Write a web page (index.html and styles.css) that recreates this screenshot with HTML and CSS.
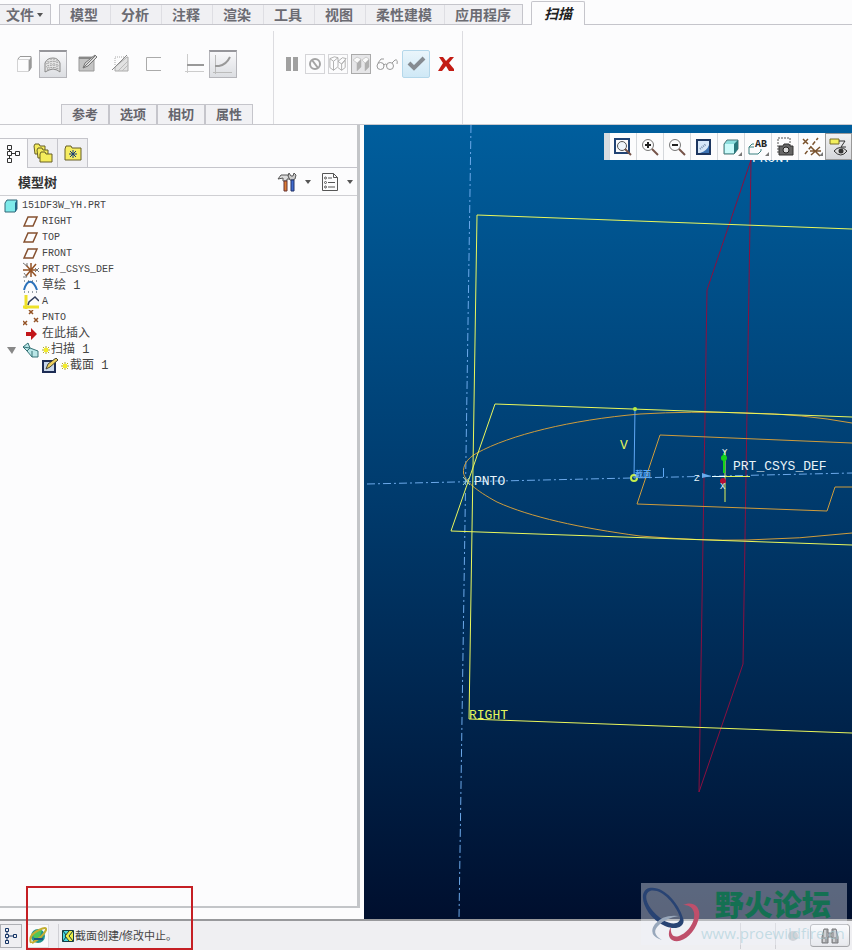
FILE: index.html
```html
<!DOCTYPE html>
<html lang="zh-CN">
  <head>
    <meta charset="UTF-8" />
    <meta name="viewport" content="width=device-width, initial-scale=1.0" />
    <title>151DF3W_YH.PRT</title>
    <link rel="stylesheet" href="styles.css">
  </head>
  <body>
    <nav class="menuBar">
      <button class="fileMenu">文件<span class="caret"></span></button>
      <div class="menuTabs">
        <button>模型</button>
        <button>分析</button>
        <button>注释</button>
        <button>渲染</button>
        <button>工具</button>
        <button>视图</button>
        <button>柔性建模</button>
        <button>应用程序</button>
      </div>
      <button class="activeTab">扫描</button>
    </nav>

    <div class="ribbon">
      <div class="ribbonGroup sweepGroup">
        <div class="tools">
          <div class="toolSet">
            <button class="tool" aria-label="实体">
              <svg width="18" height="18" viewBox="0 0 18 18" fill="none"><path d="M1.500 4.500h11v12h-11z" stroke="#aaa" stroke-dasharray="1 1"/><path d="M2 4l2-2.500h11v11L13 16" stroke="#999"/><path d="M13 5l2.500-3v11L13 16z" fill="#999"/></svg>
            </button>
            <button class="tool pressed" aria-label="曲面">
              <svg width="20" height="20" viewBox="0 0 20 20"><path d="M2 17V8Q4 3 10 3q5 0 7 5v9l-3-2q-4-2-8 0z" fill="#e4e4e4" stroke="#888"/><path d="M5 6v9M8 4v10M11 4v10M14 5v9M3 9q7-5 13-1M3 12q7-4 13-1M4 14q6-3 12 0" stroke="#999" stroke-dasharray="1 1" fill="none"/></svg>
            </button>
          </div>
          <div class="toolSet loose">
            <button class="tool" aria-label="草绘截面">
              <svg width="20" height="20" viewBox="0 0 20 20"><path d="M1 3h15v14H1z" fill="#c4c4c4" stroke="#999"/><path d="M1 3h15v2H1z" fill="#888"/><path d="M5 14l2-5 10-8 2 2-9 9z" fill="#ddd" stroke="#777"/><path d="M5 14l12-12" stroke="#777"/></svg>
            </button>
            <button class="tool" aria-label="移除材料">
              <svg width="20" height="20" viewBox="0 0 20 20" fill="none"><path d="M4 11V3h9" stroke="#aaa" stroke-dasharray="1 1"/><path d="M4 17v-4L16 3h1v14z" fill="#e2e2e2" stroke="#aaa"/><path d="M7 17L17 7M11 17l6-6" stroke="#bbb"/><path d="M1 16L16 1" stroke="#888"/></svg>
            </button>
            <button class="tool" aria-label="薄板">
              <svg width="18" height="18" viewBox="0 0 18 18" fill="none"><path d="M16 2.500H1.500v13H16" stroke="#aaa"/></svg>
            </button>
          </div>
          <div class="toolSet">
            <button class="tool" aria-label="恒定截面">
              <svg width="20" height="20" viewBox="0 0 20 20"><path d="M2.500 0v19M0 17.500h19" stroke="#ccc"/><path d="M2 11h17" stroke="#999" stroke-width="2"/></svg>
            </button>
            <button class="tool pressed" aria-label="可变截面">
              <svg width="20" height="20" viewBox="0 0 20 20" fill="none"><path d="M2.500 0v19M0 17.500h19" stroke="#bbb"/><path d="M2 11h4q7-1 11-9" stroke="#999" stroke-width="2"/></svg>
            </button>
          </div>
        </div>
        <div class="subTabs">
          <button>参考</button>
          <button>选项</button>
          <button>相切</button>
          <button>属性</button>
        </div>
      </div>
      <div class="ribbonGroup confirmGroup">
        <div class="tools">
          <button class="tool small" aria-label="暂停">
            <svg width="14" height="14" viewBox="0 0 14 14"><path d="M1 0h5v14H1zM8 0h5v14H8z" fill="#a0a0a0"/></svg>
          </button>
          <button class="tool small framed" aria-label="无预览">
            <svg width="14" height="14" viewBox="0 0 14 14" fill="none" stroke="#a4a4a4" stroke-width="2"><circle cx="7" cy="7" r="5"/><path d="M4 3l6 8"/></svg>
          </button>
          <button class="tool small framed" aria-label="分离预览">
            <svg width="18" height="18" viewBox="0 0 20 18" fill="none" stroke="#aaa"><path d="M1 3l4 3v10L1 13zM5 6l5-4v10l-5 4M10 2L6 1 1 3M10 6l4 3v7l-4-3M14 9l4-4v8l-4 3M10 6l5-4 4 1-5 6"/></svg>
          </button>
          <button class="tool small framed sunk" aria-label="连接预览">
            <svg width="18" height="16" viewBox="0 0 18 16"><path d="M1 4l4-3 4 2v8l-4 4V7zM10 4l4-3 3 2v8l-4 4V7z" fill="#fafafa" stroke="#ccc"/><path d="M5 7l4-4v8l-4 4zM13 7l4-4v8l-4 4z" fill="#b0b0b0"/></svg>
          </button>
          <button class="tool small glasses" aria-label="特征预览">
            <svg width="22" height="14" viewBox="0 0 22 14" fill="none" stroke="#999"><circle cx="4.500" cy="9" r="3.500"/><circle cx="14" cy="9" r="3.500"/><path d="M8 8q1-2 3 0M2 6l3-4h3M16 6l3-3q3-1 2 4"/></svg>
          </button>
          <button class="tool accept" aria-label="确定">
            <svg width="20" height="18" viewBox="0 0 20 18"><path d="M3 8l5 5L18 3" fill="none" stroke="#858b91" stroke-width="4"/></svg>
          </button>
          <button class="tool cancel" aria-label="取消">
            <svg width="18" height="18" viewBox="0 0 18 18"><path d="M2 2h4l3 4 4-4h4l-5 6 5 6v2h-5l-3-5-4 5H1l5-8z" fill="#c31c14"/></svg>
          </button>
        </div>
      </div>
    </div>

    <main class="workArea">
      <aside class="sidebar">
        <div class="treePanel">
          <div class="panelTabs">
            <button class="current" aria-label="模型树">
              <svg width="16" height="20" viewBox="0 0 16 20" fill="none" stroke="#333"><path d="M2.500 1.500h4v4h-4zM2.500 7.500h4v4h-4zM2.500 14.500h4v4h-4zM10.500 7.500h4v4h-4zM4.500 5.500v2M4.500 11.500v3M6.500 9.500h4"/></svg>
            </button>
            <button aria-label="文件夹浏览器">
              <svg width="20" height="20" viewBox="0 0 20 20" fill="#f5ec5c" stroke="#665f26"><path d="M1 3l1-2h4l1 2h5v8H2z"/><path d="M4 7l1-2h4l1 2h5v8H5z"/><path d="M7 11l1-2h4l1 2h6v8H7z"/></svg>
            </button>
            <button aria-label="收藏夹">
              <svg width="18" height="18" viewBox="0 0 18 18"><path d="M1 5l1-3h5l1 2h9v12H1z" fill="#f6ed63" stroke="#665f26"/><path d="M9 6v8M5 10h8M6 7l6 6M12 7l-6 6" stroke="#143c78"/></svg>
            </button>
          </div>
          <div class="treeHeader">
            <h2>模型树</h2>
            <button aria-label="设置">
              <svg width="20" height="20" viewBox="0 0 20 20"><path d="M1 7l3-4h7l2 4h-3v2H6V6z" fill="#ddd" stroke="#555"/><path d="M7 9h3v10H7z" fill="#de7d32" stroke="#633"/><path d="M12 1l2 3h2l1-3 2 2-1 4-2 1h-3l-2-4z" fill="#ccc" stroke="#555"/><path d="M14 8h3v11h-3z" fill="#3f6bd0" stroke="#236"/></svg>
              <span class="caret"></span>
            </button>
            <button aria-label="显示">
              <svg width="18" height="20" viewBox="0 0 18 20" fill="none" stroke="#555"><path d="M1.500 1.500h11l4 4v13h-15zM12.500 1.500v4h4M7 6h4M7 10.500h7M7 15h7"/><circle cx="4.500" cy="6" r="1"/><circle cx="4.500" cy="10.500" r="1"/><circle cx="4.500" cy="15" r="1"/></svg>
              <span class="caret"></span>
            </button>
          </div>
          <ul class="tree">
            <li>
              <svg width="16" height="16" viewBox="0 0 16 16"><path d="M2 5l2-3h10v9l-2 3H2z" fill="#7eeaea" stroke="#367"/><path d="M12 5l2-3v9l-2 3z" fill="#268"/></svg>
              <span>151DF3W_YH.PRT</span>
            </li>
            <li class="child">
              <svg width="16" height="16" viewBox="0 0 16 16"><path d="M5 3h9l-4 9H1z" fill="none" stroke="#85502f" stroke-width="1.500"/></svg>
              <span>RIGHT</span>
            </li>
            <li class="child">
              <svg width="16" height="16" viewBox="0 0 16 16"><path d="M5 3h9l-4 9H1z" fill="none" stroke="#85502f" stroke-width="1.500"/></svg>
              <span>TOP</span>
            </li>
            <li class="child">
              <svg width="16" height="16" viewBox="0 0 16 16"><path d="M5 3h9l-4 9H1z" fill="none" stroke="#85502f" stroke-width="1.500"/></svg>
              <span>FRONT</span>
            </li>
            <li class="child">
              <svg width="16" height="16" viewBox="0 0 16 16"><path d="M0 8h13M8 1v14M3 3l10 11M13 2L3 14" stroke="#935225" stroke-width="1.500"/><path d="M0 1l4 3V1M0 15h4l-3-4M12 6l4 4M16 6l-4 4" stroke="#777" fill="none"/></svg>
              <span>PRT_CSYS_DEF</span>
            </li>
            <li class="child">
              <svg width="16" height="16" viewBox="0 0 16 16" fill="none"><path d="M1 12c3-11 9-11 13 0" stroke="#2b72bb" stroke-width="2"/><path d="M1 3h14M1 14h14" stroke="#345" stroke-dasharray="1 3"/></svg>
              <span class="cjk">草绘 1</span>
            </li>
            <li class="child">
              <svg width="16" height="16" viewBox="0 0 16 16" fill="none"><path d="M3 1v14M0 13h16" stroke="#eee12a" stroke-width="3"/><path d="M5 11l1-3 6-5 4 4" stroke="#333f5d" stroke-width="1.500"/></svg>
              <span>A</span>
            </li>
            <li class="child">
              <svg width="16" height="16" viewBox="0 0 16 16"><path d="M6 0l4 4M10 0L6 4M0 11l4 4M4 11l-4 4M11 8l4 4M15 8l-4 4" stroke="#935225" stroke-width="1.500"/></svg>
              <span>PNTO</span>
            </li>
            <li class="child">
              <svg width="16" height="16" viewBox="0 0 16 16"><path d="M3 6h5V2l6 6-6 6v-4H3z" fill="#c3171b"/></svg>
              <span class="cjk">在此插入</span>
            </li>
            <li class="parent">
              <svg width="16" height="16" viewBox="0 0 16 16"><path d="M3 5h9l-4 7z" fill="#888"/></svg>
              <svg width="16" height="16" viewBox="0 0 16 16"><path d="M0 5l5-4 2 5 8 3v6H9L4 9z" fill="#b9e6e7" stroke="#377377"/><path d="M0 5l7 1-3 3M9 15V9" fill="none" stroke="#377377"/></svg>
              <svg class="star" width="8" height="10" viewBox="0 0 8 10"><path d="M4 1v8M0 5h8M1 2l6 6M7 2L1 8" stroke="#b5ac20"/><path d="M2 3h4v4H2z" fill="#f3ec2a"/></svg>
              <span class="cjk">扫描 1</span>
            </li>
            <li class="grandchild">
              <svg width="16" height="16" viewBox="0 0 16 16"><path d="M1 3h12v11H1z" fill="#c7d6e9" stroke="#1d2c54" stroke-width="2"/><path d="M4 11l2-5 8-6 2 2-8 7z" fill="#edcf5c" stroke="#443"/></svg>
              <svg class="star" width="8" height="10" viewBox="0 0 8 10"><path d="M4 1v8M0 5h8M1 2l6 6M7 2L1 8" stroke="#b5ac20"/><path d="M2 3h4v4H2z" fill="#f3ec2a"/></svg>
              <span class="cjk">截面 1</span>
            </li>
          </ul>
        </div>
      </aside>

      <section class="viewport">
        <svg class="scene" viewBox="364 125 488 795" preserveAspectRatio="xMinYMin slice" fill="none">
          <g stroke="#6ca9ea" stroke-dasharray="8 3 2 3">
            <path d="M471 125L459 918"/>
            <path d="M367 484L852 473"/>
          </g>
          <path d="M751 160L707 290L699 792L743 664Z" stroke="#8a1040"/>
          <g stroke="#cf9c3c">
            <path d="M852 423Q803 414 747 413Q690 411 640 414C570 420 510 435 477 453C466 459 463 466 463.500 473C465 481 475 490 497 502C530 517 580 528 640 536Q700 541 747 540Q800 539 852 533"/>
            <path d="M852 443L660 435L637 504L827 511L835 487H852"/>
          </g>
          <g stroke="#eaf75c">
            <path d="M852 229L477 215L469 719L852 733"/>
            <path d="M852 417L495 404L451 531L852 545"/>
          </g>
          <path d="M635 408L634 478M663.500 468v9" stroke="#5fa8f5"/>
          <circle cx="635" cy="409" r="2" fill="#b9ee42"/>
          <circle cx="634" cy="478" r="3" stroke="#c4ee4d" stroke-width="2"/>
          <path d="M463 477l7 8M470 477l-7 8" stroke="#a7d8c2"/>
          <path d="M725 450V502M725 476.500H750" stroke="#e1f55b"/>
          <path d="M712 476.500H725" stroke="#e9ffff"/>
          <path d="M702 473l9 3-9 2z" fill="#68abed"/>
          <path d="M724 453v20" stroke="#13d41b" stroke-width="2"/>
          <circle cx="724" cy="458" r="3" fill="#13d41b"/>
          <circle cx="723" cy="481" r="3" fill="#b40d35"/>
          <g class="sceneText">
            <text x="474" y="485">PNTO</text>
            <text x="733" y="470">PRT_CSYS_DEF</text>
            <text x="752" y="162">FRONT</text>
            <text class="yellow" x="469" y="719">RIGHT</text>
            <text class="yellow" x="620" y="449">V</text>
            <text class="axis" x="694" y="481">Z</text>
            <text class="axis" x="722" y="455">Y</text>
            <text class="axis" x="720" y="489">X</text>
            <text class="sectionText" x="635" y="477">截面</text>
          </g>
        </svg>
        <div class="viewTools">
          <button aria-label="重新调整">
            <svg width="20" height="20" viewBox="0 0 20 20" fill="none"><path d="M2 2h14v14H2z" stroke="#214374" stroke-width="2"/><circle cx="9" cy="9" r="4.500" fill="#eef5fb" stroke="#555"/><path d="M12 12l6 6" stroke="#755349" stroke-width="2"/></svg>
          </button>
          <button aria-label="放大">
            <svg width="20" height="20" viewBox="0 0 20 20" fill="none"><circle cx="8" cy="8" r="5.500" stroke="#777"/><path d="M5 8h6M8 5v6" stroke="#222" stroke-width="2"/><path d="M12 12l6 6" stroke="#755349" stroke-width="2"/></svg>
          </button>
          <button aria-label="缩小">
            <svg width="20" height="20" viewBox="0 0 20 20" fill="none"><circle cx="8" cy="8" r="5.500" stroke="#777"/><path d="M5 8h6" stroke="#222" stroke-width="2"/><path d="M12 12l6 6" stroke="#755349" stroke-width="2"/></svg>
          </button>
          <button aria-label="重画">
            <svg width="18" height="18" viewBox="0 0 18 18"><path d="M2 2h13v14H2z" fill="#d7e7f8" stroke="#1d3660" stroke-width="2"/><path d="M14 7v8H5q7-2 9-8z" fill="#3c72b2"/><path d="M5 11l6-5" stroke="#7d93b0" stroke-width="2" stroke-dasharray="1 1"/></svg>
          </button>
          <button class="more" aria-label="显示样式">
            <svg width="18" height="18" viewBox="0 0 18 18"><path d="M2 6l3-4h11v9l-4 5H2z" fill="#8bdede" stroke="#4d7476"/><path d="M3 6h9v9H3z" fill="#cafafa"/><path d="M12 6l4-4v9l-4 5z" fill="#28777b"/></svg>
          </button>
          <button class="more" aria-label="已命名视图">
            <svg width="20" height="20" viewBox="0 0 20 20" fill="none"><path d="M6 7H4l-3 3v7h9l3-3v-2M1 10h5" stroke="#398080"/><text class="iconText" x="7" y="10">AB</text></svg>
          </button>
          <button aria-label="视图管理器">
            <svg width="20" height="20" viewBox="0 0 20 20"><path d="M3 1h12v8M3 2v15" fill="none" stroke="#555" stroke-dasharray="2 1"/><path d="M4 9h4l1-2h5l1 2h3v9H4z" fill="#666" stroke="#333"/><circle cx="11" cy="13" r="3" fill="#ddd" stroke="#222"/></svg>
          </button>
          <button class="more" aria-label="基准显示过滤器">
            <svg width="20" height="20" viewBox="0 0 20 20"><path d="M1 2l5 5M6 2L1 7M9 10l9 9M9 18l9-8M8 14h11" stroke="#79522d" stroke-width="1.500"/><path d="M3 17L16 1" stroke="#79522d" stroke-width="1.500" stroke-dasharray="4 2"/></svg>
          </button>
          <button class="pressed" aria-label="注释显示">
            <svg width="20" height="20" viewBox="0 0 20 20"><path d="M1 2h9v5H1z" fill="#f2ef5d" stroke="#776c2a"/><path d="M10 4h6l-4 6h5" fill="none" stroke="#333"/><path d="M5 14q6-7 13 0-6 8-13 0z" fill="#ddd" stroke="#333"/><circle cx="12" cy="14" r="2.500" fill="#333"/></svg>
          </button>
        </div>
      </section>
    </main>

    <footer class="statusBar">
      <button class="statusButton" aria-label="导航器">
        <svg width="16" height="18" viewBox="0 0 16 18" fill="none" stroke="#153566"><path d="M2.500 1.500h3v3h-3zM2.500 7.500h3v3h-3zM2.500 13.500h3v3h-3zM10.500 7.500h3v3h-3zM4 4.500v3M4 10.500v3M5.500 9h5"/></svg>
      </button>
      <button class="statusButton browser" aria-label="浏览器">
        <svg width="18" height="18" viewBox="0 0 18 18" fill="none"><circle cx="9" cy="9" r="7" fill="#22938f"/><path d="M4 9q1-6 9-6l-2 6-3 5z" fill="#51c657"/><path d="M2 16Q-1 8 10 3q8-4 7 0Q14 10 3 16" stroke="#c2ae32" stroke-width="2"/><path d="M5 12h9" stroke="#1d5883" stroke-width="2"/></svg>
      </button>
      <p class="message">
        <svg width="12" height="12" viewBox="0 0 12 12"><path d="M0 0h12v12H0z" fill="#47d8df"/><path d="M7 0h5v12H7L3 6z" fill="#eced48"/><path d="M.5.500h11v11H.5zM7 1L3 6l4 5M11 1L7 6l4 5M1 1l3 4M1 11l3-4" fill="none" stroke="#153d42"/></svg>
        <span>截面创建/修改中止。</span>
      </p>
      <div class="statusCell"></div>
      <div class="statusCell"><span class="light"></span></div>
      <button class="findButton" aria-label="查找">
        <svg width="18" height="18" viewBox="0 0 18 18"><path d="M3 2h4v4h4V2h4l2 8v6h-6v-6H7v6H1v-6z" fill="#777" stroke="#333"/><path d="M4 3v7M14 3v7M3 12v3M13 12v3" stroke="#fff"/></svg>
      </button>
    </footer>

    <div class="watermark">
      <svg width="60" height="60" viewBox="0 0 60 60">
        <path d="M42 35C38 20 22 2 8 5C-5 9 4 34 24 43C36 48 45 43 42 35ZM39 34C40 42 30 42 22 37C8 28 0 12 9 8C20 5 34 20 39 34Z" fill="#284373" fill-rule="evenodd"/>
        <path d="M42 22C52 17 62 24 57 38C53 51 40 62 31 57C26 54 28 47 30 44C29 52 33 56 40 52C50 47 56 34 52 27C50 23 46 22 42 22Z" fill="#bf4f6b"/>
        <path d="M38 33Q22 31 14 41q-8 11 7 16q-12-7-3-15q7-7 20-9z" fill="#98a7bb"/>
      </svg>
      <div class="watermarkText">
        <strong>野火论坛</strong>
        <span>www.proewildfire.cn</span>
      </div>
    </div>
    <div class="highlight"></div>
  </body>
</html>
```

FILE: styles.css
```css
* {
  box-sizing: border-box;
}
body {
  position: relative;
  display: flex;
  flex-direction: column;
  min-height: 100vh;
  margin: 0;
  overflow-x: hidden;
  background-color: #fcfcfd;
  color: #444;
  font-family: "Liberation Sans", "Noto Sans CJK SC", sans-serif;
  font-size: 12px;
}
button {
  display: flex;
  align-items: center;
  justify-content: center;
  padding: 0;
  border: none;
  background: none;
  color: inherit;
  font-family: inherit;
  cursor: pointer;
}
svg {
  display: block;
  flex-shrink: 0;
}
.caret {
  border: 3px solid transparent;
  border-top: 4px solid #555;
  border-bottom: none;
}

/* menu tabs */
.menuBar {
  display: flex;
  align-items: flex-end;
  height: 25px;
  border-bottom: 1px solid #c5c5cb;
}
.menuBar button {
  height: 20px;
  color: #6b6b72;
  font-size: 14px;
  font-weight: bold;
  line-height: 18px;
  white-space: nowrap;
}
.menuBar .fileMenu {
  gap: 3px;
  padding: 0 7px 0 6px;
  margin-right: 8px;
  border: 1px solid #c5c5cb;
  border-left: none;
  border-bottom: none;
  background-color: #f1f1f4;
}
.menuTabs {
  display: flex;
  margin-right: 8px;
  border: 1px solid #c5c5cb;
  border-bottom: none;
  background-color: #f0f0f3;
}
.menuTabs button {
  height: 19px;
  padding: 0 12px 0 10px;
  border-right: 1px solid #dedee3;
}
.menuTabs button:last-child {
  padding-right: 11px;
  border-right: none;
}
.menuBar .activeTab {
  height: 24px;
  padding: 0 12px;
  margin-bottom: -1px;
  border: 1px solid #c5c5cb;
  border-bottom: none;
  border-radius: 2px 2px 0 0;
  background-color: #fcfcfd;
  color: #222;
  font-style: italic;
}

/* ribbon */
.ribbon {
  display: flex;
  height: 100px;
  padding-top: 6px;
  border-bottom: 1px solid #c9c9ce;
}
.ribbonGroup {
  display: flex;
  flex-direction: column;
  justify-content: space-between;
  padding-top: 19px;
  border-right: 1px solid #dcdce0;
}
.sweepGroup {
  padding-left: 11px;
  padding-right: 20px;
}
.confirmGroup {
  padding-left: 8px;
  padding-right: 4px;
}
.tools {
  display: flex;
  align-items: center;
}
.confirmGroup .tools {
  gap: 3px;
}
.sweepGroup .tools {
  gap: 7px;
  padding-right: 15px;
}
.toolSet {
  display: flex;
}
.toolSet.loose {
  gap: 5px;
  margin-right: 6px;
}
.tool {
  width: 28px;
  height: 28px;
}
.tool.small {
  width: 20px;
  height: 20px;
}
.tool.glasses {
  width: 25px;
}
.tool.cancel {
  width: 25px;
}
.tool.pressed {
  border: 1px solid #b5b5ba;
  border-top: 2px solid #96969b;
  background: linear-gradient(#f8f8fa, #dcdee2);
}
.tool.framed {
  border: 1px solid #d5d5d8;
}
.tool.sunk {
  border-color: #aaa;
  background-color: #e6e6e8;
}
.tool.accept {
  border: 1px solid #b4d7ea;
  border-radius: 2px;
  background: linear-gradient(#eaf5fb, #cfe8f6);
}
.subTabs {
  display: flex;
  margin-left: 50px;
}
.subTabs button {
  width: 48px;
  height: 20px;
  border-top: 1px solid #c5c5cb;
  border-left: 1px solid #c5c5cb;
  border-right: 1px solid #c5c5cb;
  background-color: #f1f1f4;
  color: #65656c;
  font-size: 13px;
  font-weight: bold;
  line-height: 18px;
}

/* model tree */
.workArea {
  display: flex;
  flex: 1;
}
.sidebar {
  display: flex;
  flex: 0 0 364px;
  padding: 0 4px 11px 0;
}
.treePanel {
  display: flex;
  flex-direction: column;
  flex: 1;
  padding-top: 13px;
  border-right: 3px solid #c3c5c8;
  border-bottom: 2px solid #c3c5c8;
}
.panelTabs {
  display: flex;
  height: 30px;
  border-bottom: 1px solid #c5c5cb;
}
.panelTabs button {
  width: 30px;
  border: 1px solid #c5c5cb;
  border-left: none;
  border-bottom: none;
  background-color: #f0f0f3;
}
.panelTabs .current {
  width: 28px;
  margin-bottom: -1px;
  padding-right: 2px;
  background-color: #fcfcfd;
}
.treeHeader {
  display: flex;
  align-items: center;
  height: 28px;
  padding: 0 4px 0 18px;
  border-bottom: 1px solid #cfcfd3;
}
.treeHeader h2 {
  flex: 1;
  margin: 0;
  color: #333;
  font-size: 13px;
}
.treeHeader button {
  gap: 8px;
  margin-left: 10px;
}
.tree {
  margin: 0;
  padding: 2px 0;
  list-style: none;
  font-family: "Liberation Mono", "Noto Sans CJK SC", monospace;
  font-size: 10px;
}
.tree li {
  display: flex;
  align-items: center;
  gap: 3px;
  height: 16px;
  padding-left: 3px;
  line-height: 16px;
}
.tree .child {
  padding-left: 23px;
}
.tree .parent {
  padding-left: 4px;
}
.tree .grandchild {
  padding-left: 42px;
}
.tree .star {
  margin-right: -2px;
}
.cjk {
  font-size: 12px;
}

/* graphics window */
.viewport {
  position: relative;
  flex: 1;
  overflow: hidden;
  background: linear-gradient(#005e9d, #003a6c 48%, #000f2e);
}
.scene {
  position: absolute;
  top: 0;
  left: 0;
  width: 100%;
  height: 100%;
}
.sceneText {
  fill: #e8f3f8;
  font-family: "Liberation Mono", monospace;
  font-size: 13px;
}
.yellow {
  fill: #e4f65c;
}
.axis {
  font-size: 9px;
}
.sectionText {
  fill: #5ea8f5;
  font-family: "Noto Sans CJK SC", sans-serif;
  font-size: 8px;
  font-weight: bold;
}
.viewTools {
  position: absolute;
  top: 8px;
  right: 0;
  display: flex;
  height: 27px;
  padding-left: 5px;
  background-color: #d8dce0;
}
.viewTools button {
  position: relative;
  width: 27px;
  border-left: 1px solid #d5d8dc;
  background-color: #fcfcfd;
}
.viewTools .pressed {
  border: 1px solid #999;
  background: linear-gradient(#f2f2f3, #d5d7db);
}
.more::after {
  content: "";
  position: absolute;
  right: 2px;
  bottom: 4px;
  border-left: 4px solid transparent;
  border-bottom: 4px solid #777;
}
.iconText {
  fill: #222;
  font-family: "Liberation Mono", monospace;
  font-size: 10px;
  font-weight: bold;
}

/* status bar */
.statusBar {
  display: flex;
  align-items: center;
  height: 31px;
  padding-right: 2px;
  border-top: 2px solid #98999c;
  background-color: #efeff2;
}
.statusButton {
  width: 22px;
  height: 24px;
  border: 1px solid #aeb0b5;
}
.statusButton.browser {
  margin-left: 5px;
  border-color: #dcdce0;
  background-color: #fafafb;
}
.message {
  display: flex;
  flex: 1;
  align-items: center;
  gap: 1px;
  margin: 0 0 0 9px;
  padding-left: 3px;
  border-left: 1px solid #d0d0d5;
  font-size: 11px;
  line-height: 24px;
}
.statusCell {
  display: flex;
  align-items: center;
  justify-content: center;
  width: 35px;
  height: 26px;
  border-left: 1px solid #d0d0d5;
}
.light {
  width: 10px;
  height: 10px;
  border-radius: 50%;
  background-color: #bec1c4;
}
.findButton {
  width: 40px;
  height: 23px;
  border: 1px solid #a5a6aa;
  border-radius: 3px;
  background: linear-gradient(#fff, #e3e4e7);
}

/* forum mark and callout lie over the window */
.watermark {
  position: absolute;
  right: 5px;
  bottom: 5px;
  display: flex;
  width: 206px;
  height: 62px;
  background-color: rgba(240, 242, 250, 0.38);
  pointer-events: none;
}
.watermarkText {
  display: flex;
  flex: 1;
  flex-direction: column;
  align-items: center;
  padding-right: 6px;
}
.watermarkText strong {
  color: #147052;
  font-family: "Noto Sans CJK SC", sans-serif;
  font-size: 29px;
  font-weight: 900;
  line-height: 40px;
}
.watermarkText span {
  color: rgba(165, 205, 215, 0.6);
  font-family: "Open Sans", sans-serif;
  font-size: 15px;
  line-height: 20px;
}
.highlight {
  position: absolute;
  bottom: 0;
  left: 26px;
  width: 167px;
  height: 64px;
  border: 2px solid #c51f24;
  pointer-events: none;
}
```
